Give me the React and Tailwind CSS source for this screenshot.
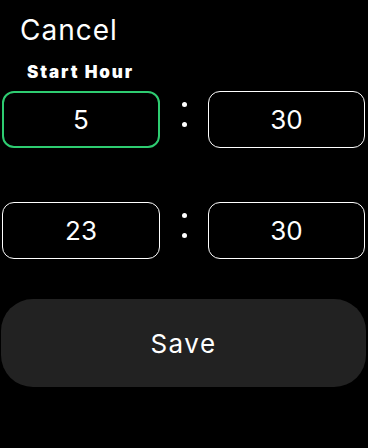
export default function App() {
  const rows = [
    { hour: '5', minute: '30', active: true },
    { hour: '23', minute: '30', active: false },
  ];

  return (
    <div className="h-[448px] w-[368px] overflow-hidden bg-black text-white" style={{ fontFamily: 'Inter, "Noto Sans", sans-serif' }}>
      {/* Header */}
      <div className="pt-[13px] pl-[20px] text-[28px] leading-[34px] font-normal tracking-[1px]">Cancel</div>

      <div className="mt-[15px] pl-[27px] text-[17px] leading-[21px] font-black tracking-[1.9px]">Start Hour</div>

      {/* Time rows */}
      <div className="mt-[8px] flex flex-col gap-[54px] pl-[2px] pr-[3px]">
        {rows.map((r, i) => (
          <div key={i} className="flex h-[57px]">
            <div
              className={
                r.active
                  ? 'flex w-[158px] items-center justify-center rounded-[12px] border-2 border-[#2ecc71] text-[26px] font-normal'
                  : 'flex w-[158px] items-center justify-center rounded-[12px] border-[1.5px] border-white text-[26px] font-normal'
              }
            >
              {r.hour}
            </div>
            <div className="flex w-[48px] flex-col items-center gap-[15px] pt-[11px]">
              <span className="h-[5px] w-[5px] rounded-full bg-white" />
              <span className="h-[5px] w-[5px] rounded-full bg-white" />
            </div>
            <div className="flex w-[157px] items-center justify-center rounded-[12px] border-[1.5px] border-white text-[26px] font-normal">
              {r.minute}
            </div>
          </div>
        ))}
      </div>

      {/* Save */}
      <div className="mt-[40px] px-[1px]">
        <button className="flex h-[88px] w-[365px] items-center justify-center rounded-[32px] bg-[#222222] text-[26px] font-normal tracking-[1.5px] text-white">
          Save
        </button>
      </div>
    </div>
  );
}
